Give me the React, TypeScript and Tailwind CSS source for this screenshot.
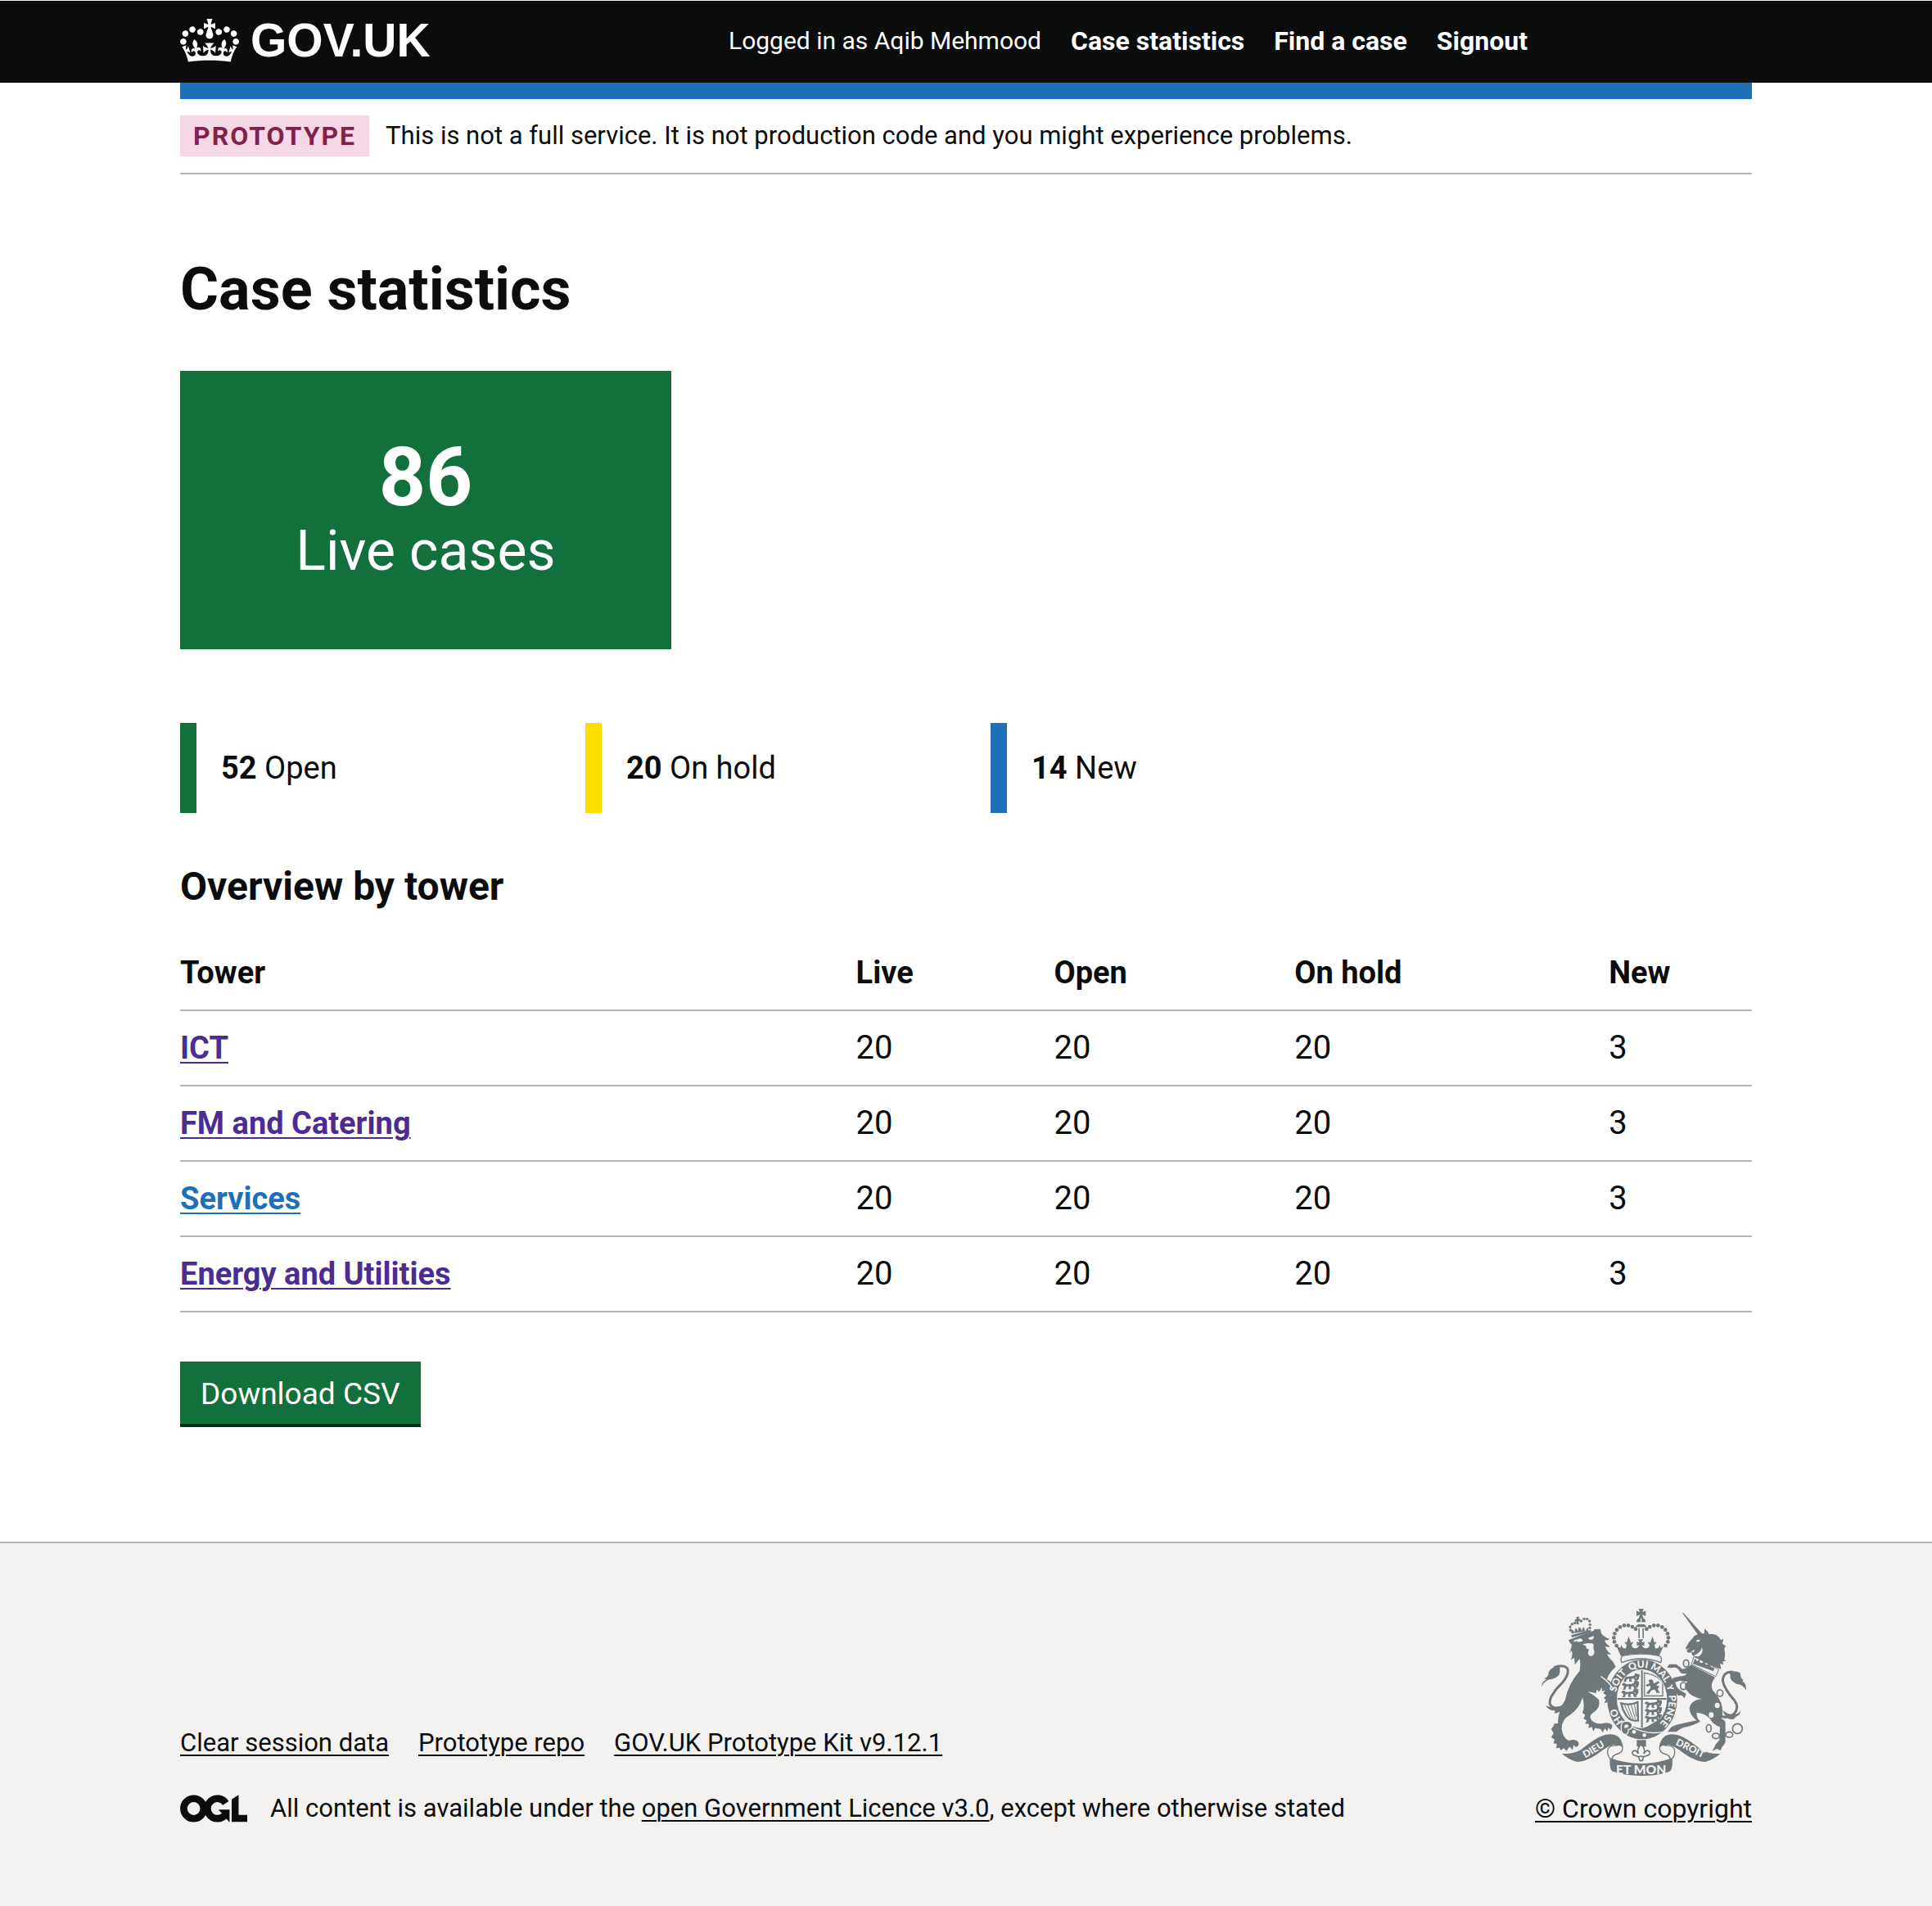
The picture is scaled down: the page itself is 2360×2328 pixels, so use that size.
import React from "react";

const INK = "#6f777b";
const PAPER = "#f3f2f1";

function CrownMark() {
  return (
    <svg aria-hidden="true" viewBox="0 0 132 97" className="h-[53px] w-[72px] shrink-0" fill="currentColor">
      <path
        fillRule="evenodd"
        d="M25 30.2c3.5 1.5 7.7-.2 9.1-3.7 1.5-3.6-.2-7.8-3.9-9.2-3.6-1.4-7.6.3-9.1 3.9-1.4 3.5.3 7.5 3.9 9zM9 39.5c3.6 1.5 7.8-.2 9.2-3.7 1.5-3.6-.2-7.8-3.9-9.1-3.6-1.5-7.6.2-9.1 3.8-1.4 3.5.3 7.5 3.8 9zM4.4 57.2c3.5 1.5 7.7-.2 9.1-3.8 1.5-3.6-.2-7.7-3.9-9.1-3.5-1.5-7.6.3-9.1 3.8-1.4 3.5.3 7.6 3.9 9.1zm38.3-21.4c3.5 1.5 7.7-.2 9.1-3.8 1.5-3.6-.2-7.7-3.9-9.1-3.6-1.5-7.6.3-9.1 3.8-1.3 3.6.4 7.7 3.9 9.1zm64.4-5.6c-3.6 1.5-7.8-.2-9.1-3.7-1.5-3.6.2-7.8 3.8-9.2 3.6-1.4 7.7.3 9.2 3.9 1.3 3.5-.4 7.5-3.9 9zm15.9 9.3c-3.6 1.5-7.7-.2-9.1-3.7-1.5-3.6.2-7.8 3.7-9.1 3.6-1.5 7.7.2 9.2 3.8 1.5 3.5-.3 7.5-3.8 9zm4.7 17.7c-3.6 1.5-7.8-.2-9.2-3.8-1.5-3.6.2-7.7 3.9-9.1 3.6-1.5 7.7.3 9.2 3.8 1.3 3.5-.4 7.6-3.9 9.1zM89.3 35.8c-3.6 1.5-7.8-.2-9.2-3.8-1.4-3.6.2-7.7 3.9-9.1 3.6-1.5 7.7.3 9.2 3.8 1.4 3.6-.3 7.7-3.9 9.1zM69.7 17.7l8.9 4.7V9.3l-8.9 2.8c-.2-.3-.5-.6-.9-.9L72.4 0H59.6l3.5 11.2c-.3.3-.6.5-.9.9l-8.8-2.8v13.1l8.8-4.7c.3.3.6.7.9.9l-5 15.4v.1c-.2.8-.4 1.6-.4 2.4 0 4.1 3.1 7.5 7 8.1h.2c.3 0 .7.1 1 .1.4 0 .7 0 1-.1h.2c4-.6 7.1-4.1 7.1-8.1 0-.8-.1-1.7-.4-2.4V34l-5.1-15.4c.4-.2.7-.6 1-.9zM66 92.8c16.9 0 32.8 1.1 47.1 3.2 4-16.9 8.9-26.7 14-33.5l-9.6-3.4c1 4.9 1.1 7.2 0 10.2-1.5-1.4-3-4.3-4.2-8.7L108.6 76c2.8-2 5-3.2 7.5-3.3-4.4 9.4-10 11.9-13.6 11.2-4.3-.8-6.3-4.6-5.6-7.9 1-4.7 5.7-5.9 8-.5 4.3-8.7-3-11.4-7.6-8.8 7.1-7.2 7.9-13.5 2.1-21.1-8 6.1-8.1 12.3-4.5 20.8-4.7-5.4-12.1-2.5-9.5 6.2 3.4-5.2 7.9-2 7.2 3.1-.6 4.3-6.4 7.8-13.5 7.2-10.3-.9-10.9-8-11.2-13.8 2.5-.5 7.1 1.8 11 7.3L80.2 60c-4.1 4.4-8 5.3-12.3 5.4 1.4-4.4 8-11.6 8-11.6H55.5s6.4 7.2 7.9 11.6c-4.2-.1-8-1-12.3-5.4l1.4 16.4c3.9-5.5 8.5-7.7 10.9-7.3-.3 5.8-.9 12.8-11.1 13.8-7.2.6-12.9-2.9-13.5-7.2-.7-5 3.8-8.3 7.1-3.1 2.7-8.7-4.6-11.6-9.4-6.2 3.7-8.5 3.6-14.7-4.6-20.8-5.8 7.6-5 13.9 2.2 21.1-4.7-2.6-11.9.1-7.7 8.8 2.3-5.5 7.1-4.2 8.1.5.7 3.3-1.3 7.1-5.7 7.9-3.5.7-9-1.8-13.5-11.2 2.5.1 4.7 1.3 7.5 3.3l-4.7-15.4c-1.2 4.4-2.7 7.2-4.3 8.7-1.1-3-.9-5.3 0-10.2l-9.5 3.4c5 6.9 9.9 16.7 14 33.5 14.8-2.1 30.8-3.2 47.7-3.2z"
      />
    </svg>
  );
}

function LicenceMark() {
  return (
    <svg aria-hidden="true" viewBox="0 0 483 196" className="h-[34px] w-[82px] shrink-0" fill="none" stroke="currentColor" strokeWidth="51">
      <circle cx="98" cy="98" r="72" />
      <path d="M329 59 A72 72 0 1 0 326 141" />
      <path d="M276 106 h80 v88 h-3 Z" fill="currentColor" stroke="none" />
      <path d="M371 32 L421 0 V143 H483 V194 H371 Z" fill="currentColor" stroke="none" />
    </svg>
  );
}

const ARCH_PEARLS: [number, number][] = [
  [347, 210], [339, 196], [337, 181], [340, 166], [348, 152], [360, 142], [375, 136], [390, 136], [405, 141], [417, 149],
];

const WALKING_LIONS = [
  [368, 328], [366, 356], [364, 384], [450, 424], [450, 450], [450, 476],
];

function RoyalArms() {
  return (
    <svg aria-hidden="true" viewBox="72 75 750 612" className="h-[204px] w-[250px] overflow-visible" fill={INK}>
      <defs>
        <path id="garter" d="M441 523 A98 116 0 0 1 441 291 A98 116 0 0 1 441 523" />
        <path id="ribbon-left" d="M211 631 C250 616 280 594 324 566" />
        <path id="ribbon-right" d="M546 567 C590 582 625 606 678 629" />
        <clipPath id="shield"><ellipse cx="440" cy="405" rx="90" ry="106" /></clipPath>
      </defs>

      {/* Garter and quartered shield */}
      <ellipse cx="441" cy="407" rx="128" ry="146" />
      <ellipse cx="440" cy="405" rx="92" ry="108" fill={PAPER} />
      <g clipPath="url(#shield)">
        <path d="M437 300h6v215h-6zM348 402h184v6H348z" />
        {WALKING_LIONS.map(([x, y]) => (
          <path
            key={x + "-" + y}
            transform={`translate(${x} ${y})`}
            d="M0 -2 q4 -10 12 -6 l6 4 l18 -2 q10 0 10 -10 q8 -2 10 5 q-2 6 -8 8 l6 14 l7 3 h-14 l-4 -11 h-8 l-2 8 l5 3 h-12 l-1 -12 l-8 3 l-4 10 h-10 l4 -5 l1 -8 z M50 -14 h13 v10 l-5 12 h-6 z"
          />
        ))}
        <path d="M449 310 V394 H516 V345 Q500 318 449 310 Z" fill="none" stroke={INK} strokeWidth="5" strokeDasharray="6 1.5" />
        <path d="M464 338 q8 -8 16 -1 l4 12 l16 -9 l4 6 l-12 9 l12 4 l-6 10 l8 14 h-12 l-6 -12 l-12 2 l-10 13 h-10 l4 -7 l12 -14 l-2 -8 l-12 3 l-4 -6 l14 -6 z" />
        <path d="M364 421 Q395 431 424 417 L426 484 Q396 490 380 462 Q368 444 364 421 Z" fill="none" stroke={INK} strokeWidth="7" />
        <path d="M376 427l24 52M388 427l20 54M400 425l16 54M412 422l8 48" fill="none" stroke={INK} strokeWidth="3" />
      </g>
      <path d="M408 512 Q440 520 470 500 L520 470 Q508 500 486 518 Q440 528 408 512 Z" />

      {/* Imperial crown */}
      <path d="M366 272 Q356 246 384 245 Q437 236 490 245 Q519 246 509 272 Q475 258 437 258 Q400 258 366 272Z" fill={PAPER} stroke={INK} strokeWidth="4" />
      {ARCH_PEARLS.map(([x, y]) => (
        <g key={x + "-" + y}>
          <circle cx={x} cy={y} r="7" />
          <circle cx={874 - x} cy={y} r="7" />
        </g>
      ))}
      <path d="M351 212 l10 6 l4 -12 q2 16 16 14 l3 -12 l-8 -10 q6 -4 8 2 q2 -8 7 -24 q7 16 9 24 q4 -6 8 -2 l-6 10 q2 12 14 12 q10 0 14 -12 l-9 3 v-16 l8 4 q4 -3 -4 -12 h20 q-8 9 -4 12 l8 -4 v16 l-9 -3 q4 12 14 12 q12 0 14 -12 l-6 -10 q4 -4 8 2 q2 -8 9 -24 q5 16 7 24 q2 -6 8 -2 l-8 10 l3 12 q14 2 16 -14 l4 12 l10 -6 q-8 16 -16 36 q-70 -18 -140 0 q-8 -16 -16 -36z" />
      <path d="M418 142 a19 12 0 0 1 38 0 z" />
      <path d="M418 130h38" stroke={PAPER} strokeWidth="3" />
      <path d="M427 146h5v36h-5zM442 146h5v36h-5z" />
      <path d="M420 124 a17 17 0 0 1 34 0 z" />
      <path d="M435 104h4v20h-4z" fill={PAPER} />
      <path d="M427 75 h20 l-6 13 l13 -6 v20 l-13 -6 l5 14 h-18 l5 -14 l-13 6 v-20 l13 6z" />

      {/* Lion supporter */}
      <path d="M180 172 L252 152 L254 160 L184 180 Z" />
      <path d="M182 166 q-4 -14 4 -14 l8 10 q-1 -14 5 -16 q6 4 6 12 q3 -6 3 -14 q6 -2 8 4 l4 8 q1 -8 6 -14 q6 6 5 14 q7 -2 8 -12 q7 4 3 12 z" />
      {[[178, 153], [177, 141], [184, 131], [194, 127], [217, 120], [228, 112], [239, 112], [248, 120], [250, 133], [249, 145]].map(([x, y]) => (
        <circle key={x + "-" + y} cx={x} cy={y} r="5" />
      ))}
      <path d="M200 104h10l-2 8l6 0v8l-7 0l2 12h-9l0 -11l-6 1v-8l6 -1z" />
      <path d="M171 190 Q215 170 264 155 L266 150 L288 149 L291 166 Q302 180 322 186 Q312 192 303 190 Q308 206 324 214 Q312 216 305 212 Q312 232 328 241 Q318 244 312 240 Q320 258 332 266 Q338 276 345 289 Q322 304 312 332 Q334 348 341 370 Q350 398 346 428 L338 416 L334 434 L326 420 L314 432 L316 418 L302 420 L308 408 L300 402 L310 392 L298 384 L306 374 L293 377 L294 362 L282 380 L275 370 L272 384 L240 378 Q262 388 282 408 Q290 440 258 458 Q244 470 256 484 Q272 500 300 494 Q318 490 330 500 Q334 512 324 518 L316 510 L314 524 L304 514 L296 528 L288 515 L268 512 L262 524 L256 508 L244 512 L246 498 L232 496 L238 484 L226 478 L232 464 L222 456 Q232 430 222 400 Q212 440 176 464 Q146 480 146 512 Q148 546 172 558 Q200 550 208 566 Q210 578 198 582 L190 574 L186 592 L174 580 L164 596 L154 586 L142 594 L138 584 L126 586 L128 570 L116 568 L120 554 L108 546 L116 530 L108 516 L116 504 Q116 492 132 496 Q132 448 158 410 Q170 350 212 302 Q216 270 212 258 L194 280 L192 254 L180 262 Q188 240 182 228 L174 238 Q182 218 183 206 Q176 202 171 190Z" />
      <path d="M192 190 l24 -7 l8 8 q-14 10 -24 2 l-10 4z M242 182 l22 -8 l-2 12 q-12 4 -16 0z M222 206 q14 -8 36 -4 q8 4 4 14 l4 20 q-4 14 -16 12 q-12 -6 -4 -24 l-10 -4 q4 -10 -14 -14z" fill={PAPER} />
      <path d="M290 323 Q320 343 336 372" fill="none" stroke={PAPER} strokeWidth="4" />
      <path d="M168 404 Q158 440 122 438 Q92 432 108 396 Q126 366 150 344 Q176 312 166 292 Q150 278 118 290" fill="none" stroke={INK} strokeWidth="9" />
      <path d="M72 360 Q72 344 90 334 L82 330 Q100 324 98 306 Q112 284 144 282 Q136 292 140 304 Q138 326 112 332 Q84 334 72 360Z" />
      <path d="M88 430 q22 10 42 6 q20 0 28 -12 q0 18 -14 22 q-6 10 -26 12 q6 -6 2 -10 q-22 0 -32 -18z" />

      {/* Garter motto and buckle */}
      <path d="M315 336 Q325 298 364 274" fill="none" stroke={PAPER} strokeWidth="3" />
      <g fill={PAPER} fontFamily="Lato, sans-serif" fontWeight="900" fontSize="36" textAnchor="middle">
        <text><textPath href="#garter" startOffset="16%">HO</textPath></text>
        <text><textPath href="#garter" startOffset="35%">SOIT</textPath></text>
        <text><textPath href="#garter" startOffset="48%">QUI</textPath></text>
        <text><textPath href="#garter" startOffset="60%">MAL</textPath></text>
        <text><textPath href="#garter" startOffset="69%">Y</textPath></text>
        <text><textPath href="#garter" startOffset="81%">PENSE</textPath></text>
      </g>
      <path d="M364 505 q0 -20 22 -18 q20 2 18 18 q-2 12 -14 12 q2 18 -12 18 q-16 -2 -14 -30z" stroke={PAPER} strokeWidth="4" />
      <path d="M376 502 q10 -8 16 2 q-4 10 -16 8z" fill={PAPER} />
      <circle cx="411" cy="526" r="7" fill={PAPER} />
      <circle cx="449" cy="538" r="7" fill={PAPER} />
      <path d="M402 508 Q460 538 520 526" fill="none" stroke={PAPER} strokeWidth="4" />

      {/* Unicorn supporter */}
      <path d="M588 90 L592 90 L664 170 L648 174 Z" />
      <path d="M600 218 L612 198 Q626 184 632 174 Q648 164 668 166 L670 148 Q682 158 686 168 Q716 164 728 188 Q736 190 738 182 Q738 196 734 202 Q744 210 748 212 Q742 216 742 222 Q746 244 742 262 L748 266 L736 268 L738 280 L726 276 Q730 290 730 296 L718 292 Q680 280 630 250 Q620 244 622 234 Q606 240 604 228 L616 218 L604 224Z" />
      <path d="M638 192 q8 -6 16 -2 q-4 8 -12 6z M628 248 Q656 236 660 216 Q668 236 648 250z M620 232 l14 -8 l-4 10z" fill={PAPER} />
      <path d="M631 250 L722 297 L710 323 L621 278Z" fill={PAPER} stroke={INK} strokeWidth="3" />
      <path d="M630 270 l4 -14 l8 12 l8 -8 l4 14 l8 -2 l6 -8 l6 16 l10 -2 l2 -6 l8 16 l12 4 l-4 12 L626 276z" />
      <path d="M620 280 L708 326 Q690 350 698 372 Q720 396 730 420 Q740 450 732 478 Q748 484 746 500 L746 562 Q742 576 734 580 L728 594 L714 588 L698 596 L710 572 L724 556 L726 508 Q700 500 690 478 Q668 456 640 456 Q640 476 654 488 Q630 502 592 510 Q576 516 566 526 L534 526 L548 508 L566 500 L640 484 Q614 462 614 440 Q620 408 660 406 Q620 398 606 376 Q588 360 608 340 Q596 344 580 338 L562 344 Q566 362 578 372 L602 386 L596 402 L586 392 L572 392 Q552 368 548 336 L556 328 L582 322 Q600 322 604 312 Q580 316 576 300 Q566 286 548 292 L532 290 L540 278 L566 278 Q584 290 588 296 Q600 296 620 280Z" />
      <g fill={PAPER}>
        <ellipse cx="716" cy="429" rx="9" ry="10" />
        <ellipse cx="694" cy="464" rx="9" ry="10" />
      </g>
      <g fill="none" stroke={INK} strokeWidth="5">
        <ellipse cx="602" cy="275" rx="10" ry="13" />
        <ellipse cx="592" cy="358" rx="11" ry="13" />
        <ellipse cx="726" cy="384" rx="11" ry="12" />
        <ellipse cx="685" cy="513" rx="9" ry="14" />
        <ellipse cx="711" cy="541" rx="13" ry="10" />
        <ellipse cx="760" cy="536" rx="13" ry="10" />
        <circle cx="790" cy="514" r="18" />
      </g>
      <path d="M724 464 Q744 482 778 460 Q798 436 780 412 Q740 366 736 338 Q738 304 772 306" fill="none" stroke={INK} strokeWidth="9" />
      <path d="M758 306 Q780 300 800 310 Q802 332 812 336 L808 340 Q824 350 821 374 Q812 352 786 350 Q760 338 764 318Z" />
      <path d="M736 446 q20 18 40 16 q16 2 26 -14 q-2 20 -18 22 q-4 10 -18 10 q-22 -4 -30 -34z" />

      {/* Motto scrolls and fleur-de-lis */}
      <path d="M421 556h34v24h-34z" />
      <path d="M437 572 q18 18 10 34 q12 -20 22 -6 q2 12 -14 14 l-10 4 q0 14 -8 14 q-8 0 -8 -14 l-10 -4 q-16 -2 -14 -14 q10 -14 22 6 q-8 -16 10 -34z" fill={PAPER} stroke={INK} strokeWidth="5" />
      <path d="M428 616h18" stroke={INK} strokeWidth="5" />
      <g fill={PAPER} stroke={INK} strokeWidth="4">
        <path d="M366 570 Q376 600 352 606 Q328 612 330 632 Q308 610 316 588 Q324 574 346 576Z" />
        <path d="M508 570 Q498 600 522 606 Q546 612 544 632 Q566 610 558 588 Q550 574 528 576Z" />
      </g>
      <path d="M147 606 Q190 608 216 592 C252 565 285 535 322 535 Q366 534 370 584 Q358 572 334 573 Q318 578 300 590 C270 612 240 634 202 636 Q172 628 147 606Z" />
      <path d="M727 606 Q684 608 658 592 C622 565 589 535 552 535 Q508 534 504 584 Q516 572 540 573 Q556 578 574 590 C604 612 634 634 672 636 Q702 628 727 606Z" />
      <path d="M323 622 Q380 642 437 642 Q494 642 551 622 Q554 656 544 670 Q500 687 437 687 Q374 687 330 670 Q320 656 323 622Z" />
      <g fill={PAPER} fontFamily="Lato, sans-serif" fontWeight="900" textAnchor="middle">
        <text x="437" y="680" fontSize="47">ET MON</text>
        <text fontSize="36"><textPath href="#ribbon-left" startOffset="50%">DIEU</textPath></text>
        <text fontSize="36"><textPath href="#ribbon-right" startOffset="50%">DROIT</textPath></text>
      </g>
    </svg>
  );
}

const navLinks = ["Case statistics", "Find a case", "Signout"];

const stats = [
  { count: 52, label: "Open", bar: "border-[#12703c]" },
  { count: 20, label: "On hold", bar: "border-[#ffdd00]" },
  { count: 14, label: "New", bar: "border-[#1d70b8]" },
];

const columns = ["Tower", "Live", "Open", "On hold", "New"];

const towers = [
  { name: "ICT", values: [20, 20, 20, 3], colour: "text-[#4c2c92]" },
  { name: "FM and Catering", values: [20, 20, 20, 3], colour: "text-[#4c2c92]" },
  { name: "Services", values: [20, 20, 20, 3], colour: "text-[#1d70b8]" },
  { name: "Energy and Utilities", values: [20, 20, 20, 3], colour: "text-[#4c2c92]" },
];

const footerLinks = ["Clear session data", "Prototype repo", "GOV.UK Prototype Kit v9.12.1"];

export default function App() {
  return (
    <div className="flex min-h-screen flex-col bg-white font-['Roboto',sans-serif] text-[#0b0c0c]">
      <header className="border-t border-[#f3f2f1] bg-[#0b0c0c] text-white">
        <div className="mx-auto flex h-[100px] max-w-[1920px] items-center pb-0.5">
          <div className="w-1/3">
            <a href="#home" className="inline-flex items-center gap-[14px]">
              <CrownMark />
              <span className="font-['Liberation_Sans',sans-serif] text-[57px] leading-[64px] font-bold">GOV.UK</span>
            </a>
          </div>
          <nav aria-label="Main" className="flex w-2/3 items-center gap-9 pl-[30px] text-[32px] leading-10">
            <span className="text-[30px]">Logged in as Aqib Mehmood</span>
            {navLinks.map((label) => (
              <a key={label} href="#nav" className="font-bold">{label}</a>
            ))}
          </nav>
        </div>
      </header>

      <div className="mx-auto w-full max-w-[1920px]">
        <div className="h-5 bg-[#1d70b8]" />
        <div className="flex items-center gap-5 border-b-2 border-[#b1b4b6] py-5">
          <strong className="bg-[#f6d7e5] px-4 text-[32px] leading-[50px] font-bold tracking-[2px] text-[#80224d]">PROTOTYPE</strong>
          <p className="text-[31px] leading-[50px]">
            This is not a full service. It is not production code and you might experience problems.
          </p>
        </div>

        <main className="pt-[99px]">
          <h1 className="text-[72px] leading-[84px] font-bold">Case statistics</h1>

          <section aria-label="Live cases" className="mt-[57px] flex h-[340px] w-[600px] flex-col items-center justify-center bg-[#12703c] pt-1 text-white">
            <strong className="text-[100px] leading-[96px] font-bold">86</strong>
            <span className="text-[68px] leading-[84px]">Live cases</span>
          </section>

          <ul className="mt-[90px] flex max-w-[1485px]">
            {stats.map(({ count, label, bar }) => (
              <li key={label} className={`${bar} w-1/3 border-l-[20px] pl-[30px] text-[38px] leading-[110px]`}>
                <strong className="font-bold">{count}</strong> {label}
              </li>
            ))}
          </ul>

          <h2 className="mt-[60px] text-[48px] leading-[60px] font-bold">Overview by tower</h2>

          <table className="mt-[30px] w-full table-fixed border-collapse text-left text-[38px] leading-[50px]">
            <colgroup>
              <col className="w-[43%]" />
              <col className="w-[12.6%]" />
              <col className="w-[15.3%]" />
              <col className="w-[20%]" />
              <col />
            </colgroup>
            <thead>
              <tr className="border-b-2 border-[#b1b4b6]">
                {columns.map((name) => (
                  <th key={name} scope="col" className="py-5 font-bold">{name}</th>
                ))}
              </tr>
            </thead>
            <tbody>
              {towers.map(({ name, values, colour }) => (
                <tr key={name} className="border-b-2 border-[#b1b4b6]">
                  <th scope="row" className="py-5 font-bold">
                    <a href="#tower" className={`${colour} underline decoration-2 underline-offset-4`}>{name}</a>
                  </th>
                  {values.map((value, i) => (
                    <td key={i} className="py-5 text-[40px]">{value}</td>
                  ))}
                </tr>
              ))}
            </tbody>
          </table>

          <button type="button" className="mt-[60px] border-b-4 border-[#002d18] bg-[#12703c] px-[25px] pt-4 pb-3 text-[37px] leading-[48px] text-white">
            Download CSV
          </button>
        </main>
      </div>

      <footer className="mt-[140px] flex-1 border-t-2 border-[#b1b4b6] bg-[#f3f2f1] text-[31px] leading-10">
        <div className="mx-auto flex max-w-[1920px] items-end justify-between pt-20">
          <div>
            <ul className="flex gap-9">
              {footerLinks.map((label) => (
                <li key={label}>
                  <a href="#footer" className="underline decoration-2 underline-offset-4">{label}</a>
                </li>
              ))}
            </ul>
            <div className="mt-10 flex items-center gap-7">
              <LicenceMark />
              <p>
                All content is available under the{" "}
                <a href="#licence" className="underline decoration-2 underline-offset-4">open Government Licence v3.0</a>
                , except where otherwise stated
              </p>
            </div>
          </div>
          <a href="#copyright" className="flex flex-col items-center gap-5 underline decoration-2 underline-offset-4">
            <RoyalArms />
            <span className="text-[32px]">© Crown copyright</span>
          </a>
        </div>
      </footer>
    </div>
  );
}
